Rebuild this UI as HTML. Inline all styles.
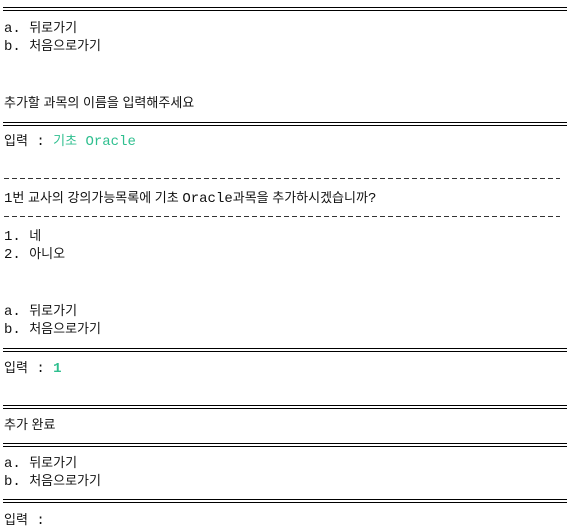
<!DOCTYPE html>
<html><head><meta charset="utf-8"><style>
body{margin:0;width:567px;height:531px;background:#fff;position:relative;overflow:hidden;font-family:"Liberation Mono","Noto Sans CJK KR",monospace;font-size:14px;color:#111}
.t{position:absolute;left:4px;line-height:18px;white-space:pre}
.k{font-family:"Liberation Sans","Noto Sans CJK KR",sans-serif;font-size:13px}
.d{position:absolute;left:3px;width:564px;height:1px;background:#000}
.das{position:absolute;left:4px;width:556px;height:1px;background:repeating-linear-gradient(90deg,#333 0 5px,transparent 5px 8px)}
.g{color:#2fbf8f}
</style></head><body>
<div class="d" style="top:7px"></div><div class="d" style="top:10px"></div>
<div class="t" style="top:19px">a. <span class="k">뒤로가기</span></div>
<div class="t" style="top:37px">b. <span class="k">처음으로가기</span></div>
<div class="t k" style="top:94px">추가할 과목의 이름을 입력해주세요</div>
<div class="d" style="top:122px"></div><div class="d" style="top:125px"></div>
<div class="t" style="top:132px"><span class="k">입력</span> :&nbsp;<span class="g"><span class="k">기초</span> Oracle</span></div>
<div class="das" style="top:178px"></div>
<div class="t" style="top:189px">1<span class="k">번 교사의 강의가능목록에 기초 </span>Oracle<span class="k">과목을 추가하시겠습니까</span>?</div>
<div class="das" style="top:216px"></div>
<div class="t" style="top:227px">1. <span class="k">네</span></div>
<div class="t" style="top:245px">2. <span class="k">아니오</span></div>
<div class="t" style="top:302px">a. <span class="k">뒤로가기</span></div>
<div class="t" style="top:320px">b. <span class="k">처음으로가기</span></div>
<div class="d" style="top:348px"></div><div class="d" style="top:351px"></div>
<div class="t" style="top:359px"><span class="k">입력</span> : <span class="g" style="font-weight:bold">1</span></div>
<div class="d" style="top:405px"></div><div class="d" style="top:408px"></div>
<div class="t k" style="top:416px">추가 완료</div>
<div class="d" style="top:443px"></div><div class="d" style="top:446px"></div>
<div class="t" style="top:454px">a. <span class="k">뒤로가기</span></div>
<div class="t" style="top:472px">b. <span class="k">처음으로가기</span></div>
<div class="d" style="top:499px"></div><div class="d" style="top:502px"></div>
<div class="t" style="top:511px"><span class="k">입력</span> :</div>
</body></html>
